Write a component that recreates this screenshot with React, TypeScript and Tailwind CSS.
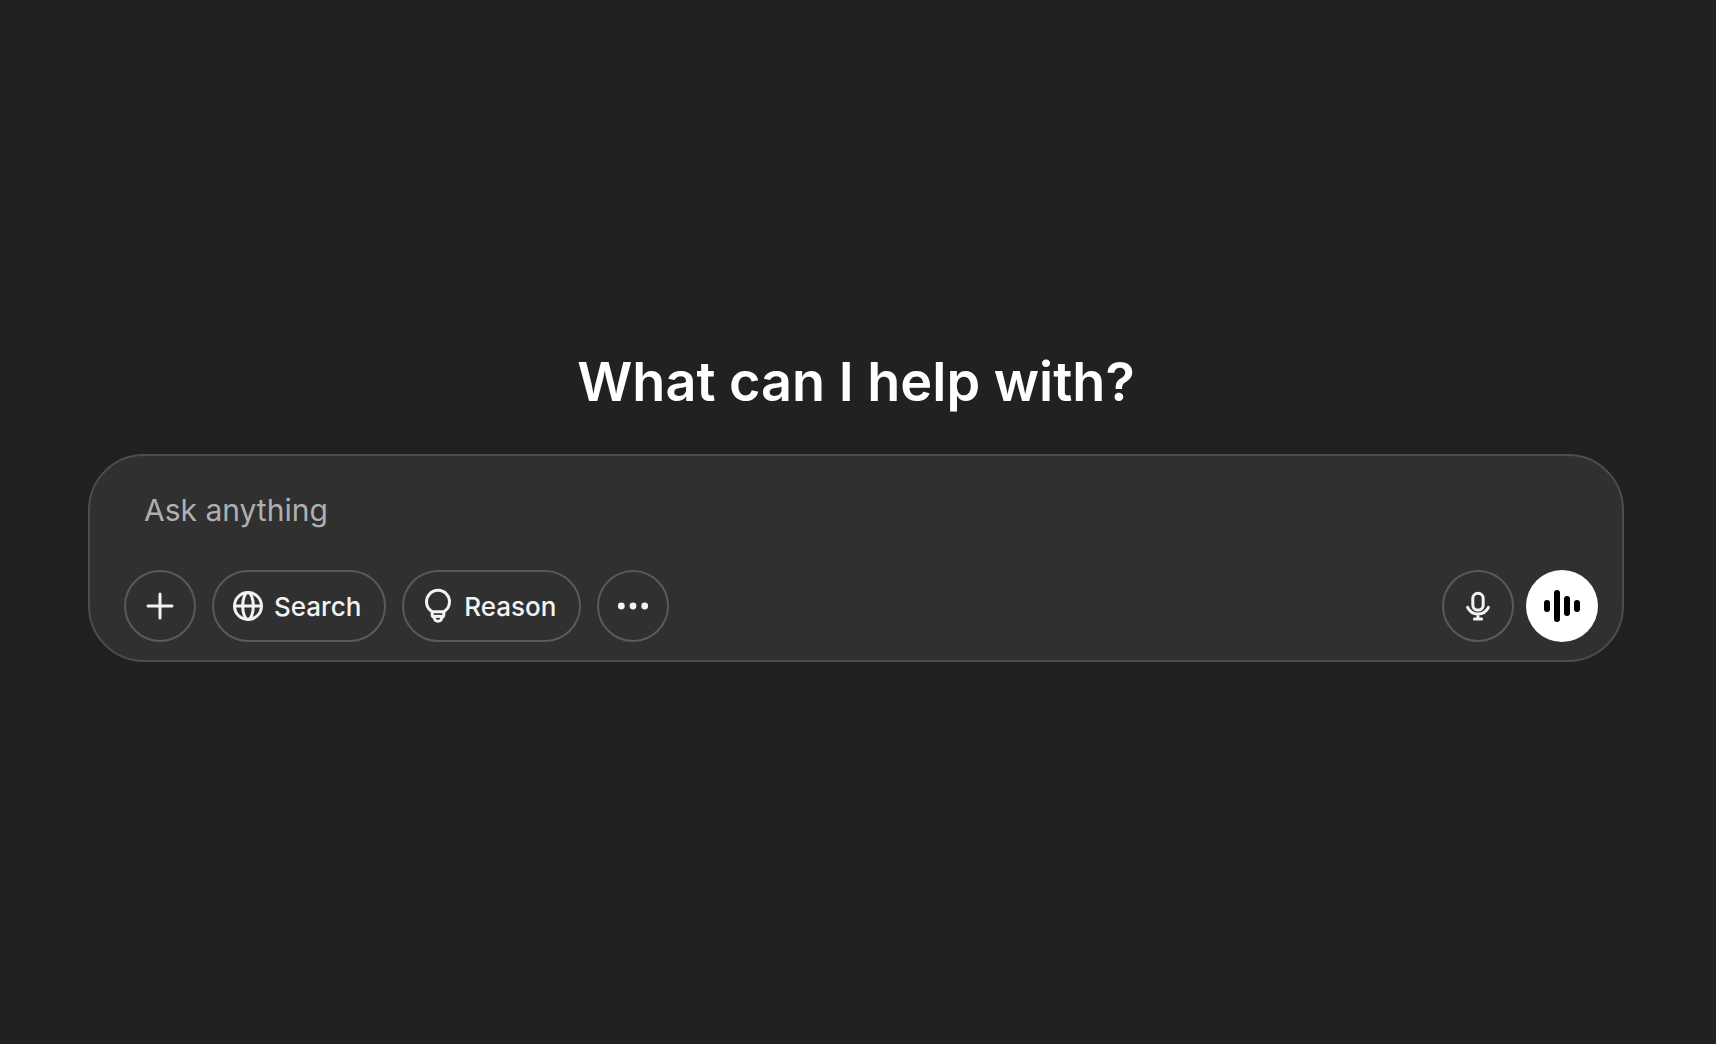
import type { ReactNode } from "react";

function IconButton({ label, children }: { label: string; children: ReactNode }) {
  return (
    <button
      type="button"
      aria-label={label}
      className="flex size-18 shrink-0 items-center justify-center rounded-full border-2 border-[#5a5a5a] text-[#f3f3f3]"
    >
      {children}
    </button>
  );
}

function PillButton({ icon, children }: { icon: ReactNode; children: ReactNode }) {
  return (
    <button
      type="button"
      className="flex h-18 shrink-0 items-center gap-2 rounded-full border-2 border-[#5a5a5a] pr-[23px] pl-4 text-[26px] font-medium text-[#f3f3f3]"
    >
      {icon}
      <span>{children}</span>
    </button>
  );
}

function PlusIcon() {
  return (
    <svg viewBox="0 0 36 36" className="size-9" fill="none" stroke="currentColor" strokeWidth="3" strokeLinecap="round">
      <path d="M18 6v24M6 18h24" />
    </svg>
  );
}

function GlobeIcon() {
  return (
    <svg viewBox="0 0 36 36" className="size-9" fill="none" stroke="currentColor" strokeWidth="3">
      <circle cx="18" cy="18" r="13.5" />
      <ellipse cx="18" cy="18" rx="5.3" ry="13.5" />
      <path d="M4.5 18h27" />
    </svg>
  );
}

function BulbIcon() {
  return (
    <svg viewBox="0 0 36 36" className="size-9" fill="none" stroke="currentColor" strokeWidth="3" strokeLinejoin="round">
      <path d="M12.2 23.8a11.5 11.5 0 1 1 11.6 0z" />
      <path d="M12.2 23.8v3.4a2 2 0 0 0 1 1.7c.7.4 1 .9 1.2 1.6.4 1.6 1.7 2.7 3.600 2.700s3.200-1.100 3.600-2.700c.2-.7.5-1.200 1.200-1.600a2 2 0 0 0 1-1.700v-3.400" />
      <path d="M13 28.400h10" />
    </svg>
  );
}

function MoreIcon() {
  return (
    <svg viewBox="0 0 36 36" className="size-9" fill="currentColor">
      <circle cx="6.3" cy="18" r="3.4" />
      <circle cx="18" cy="18" r="3.4" />
      <circle cx="29.7" cy="18" r="3.4" />
    </svg>
  );
}

function MicIcon() {
  return (
    <svg viewBox="0 0 36 36" className="size-9" fill="none" stroke="currentColor" strokeWidth="3" strokeLinecap="round">
      <rect x="12.8" y="5.3" width="10.4" height="16.8" rx="5.2" />
      <path d="M7.600 19.300a11.500 11.500 0 0 0 20.800 0M18 26v5M14.400 31h7.200" />
    </svg>
  );
}

function VoiceIcon() {
  return (
    <svg viewBox="0 0 36 36" className="size-9" fill="currentColor">
      <rect x="0" y="12" width="6" height="12" rx="3" />
      <rect x="10" y="2" width="6" height="32" rx="3" />
      <rect x="20" y="8" width="6" height="20" rx="3" />
      <rect x="30" y="12" width="6" height="12" rx="3" />
    </svg>
  );
}

export default function App() {
  return (
    <main className="flex min-h-screen flex-col justify-center bg-[#212121] pr-23 pb-[34px] pl-22 font-[Inter,sans-serif]">
      <h1 className="text-center text-[54px] leading-[68px] font-semibold text-white">What can I help with?</h1>
      <form className="mt-[38px] rounded-[56px] border-2 border-[#4d4d4d] bg-[#303030] pt-[30px] pr-6 pb-[18px] pl-[34px]">
        <input
          type="text"
          aria-label="Ask anything"
          placeholder="Ask anything"
          className="block h-12 w-full bg-transparent px-5 text-[30px] text-white outline-none placeholder:text-[#afafaf]"
        />
        <div className="mt-9 flex items-center gap-4">
          <IconButton label="Add">
            <PlusIcon />
          </IconButton>
          <PillButton icon={<GlobeIcon />}>Search</PillButton>
          <PillButton icon={<BulbIcon />}>Reason</PillButton>
          <IconButton label="More">
            <MoreIcon />
          </IconButton>
          <div className="ml-auto flex items-center gap-3">
            <IconButton label="Dictate">
              <MicIcon />
            </IconButton>
            <button
              type="button"
              aria-label="Use voice mode"
              className="flex size-18 shrink-0 items-center justify-center rounded-full bg-white text-black"
            >
              <VoiceIcon />
            </button>
          </div>
        </div>
      </form>
    </main>
  );
}
